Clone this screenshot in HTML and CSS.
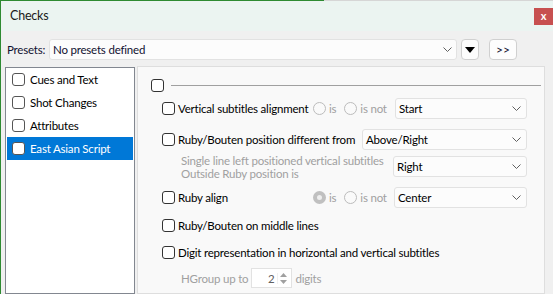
FILE: index.html
```html
<!DOCTYPE html>
<html lang="en">
<head>
  <meta charset="UTF-8">
  <link rel="stylesheet" href="styles.css">
  <title>Checks</title>
</head>
<body>

<div class="window">
  <div class="topline"></div>

  <div class="titlebar">
    <span class="title">Checks</span>
    <span class="close">x</span>
  </div>

  <div class="content">
    <div class="presets">
      <span class="presets-label">Presets:</span>
      <div class="combo combo-presets">
        <span>No presets defined</span>
        <svg class="chev" width="9" height="5" viewBox="0 0 9 5"><path d="M0.5 0.5 L4.5 4.5 L8.5 0.5" fill="none" stroke="#606060" stroke-width="1"/></svg>
      </div>
      <button class="btn btn-drop">
        <svg width="10" height="6" viewBox="0 0 10 6"><path d="M0 0 H10 L5 6 Z" fill="#000"/></svg>
      </button>
      <button class="btn btn-more">&gt;&gt;</button>
    </div>

    <div class="main">
      <ul class="list">
        <li><input type="checkbox" class="check">Cues and Text</li>
        <li><input type="checkbox" class="check">Shot Changes</li>
        <li><input type="checkbox" class="check">Attributes</li>
        <li class="selected"><input type="checkbox" class="check">East Asian Script</li>
      </ul>

      <div class="panel">
        <div class="group-head">
          <input type="checkbox" class="check">
          <span class="rule"></span>
        </div>

        <div class="row row-1">
          <label class="opt"><input type="checkbox" class="check">Vertical subtitles alignment</label>
          <span class="radios">
            <span class="radio"></span><span class="dim">is</span>
            <span class="radio radio-gap"></span><span class="dim">is not</span>
          </span>
          <div class="combo w132">
            <span>Start</span>
            <svg class="chev" width="9" height="5" viewBox="0 0 9 5"><path d="M0.5 0.5 L4.5 4.5 L8.5 0.5" fill="none" stroke="#606060" stroke-width="1"/></svg>
          </div>
        </div>

        <div class="row row-2">
          <label class="opt"><input type="checkbox" class="check">Ruby/Bouten position different from</label>
          <div class="combo w165">
            <span>Above/Right</span>
            <svg class="chev" width="9" height="5" viewBox="0 0 9 5"><path d="M0.5 0.5 L4.5 4.5 L8.5 0.5" fill="none" stroke="#606060" stroke-width="1"/></svg>
          </div>
        </div>

        <div class="row row-3">
          <span class="dim note">Single line left positioned vertical subtitles<br>Outside Ruby position is</span>
          <div class="combo w134">
            <span>Right</span>
            <svg class="chev" width="9" height="5" viewBox="0 0 9 5"><path d="M0.5 0.5 L4.5 4.5 L8.5 0.5" fill="none" stroke="#606060" stroke-width="1"/></svg>
          </div>
        </div>

        <div class="row row-4">
          <label class="opt"><input type="checkbox" class="check">Ruby align</label>
          <span class="radios">
            <span class="radio on"></span><span class="dim">is</span>
            <span class="radio radio-gap"></span><span class="dim">is not</span>
          </span>
          <div class="combo w133">
            <span>Center</span>
            <svg class="chev" width="9" height="5" viewBox="0 0 9 5"><path d="M0.5 0.5 L4.5 4.5 L8.5 0.5" fill="none" stroke="#606060" stroke-width="1"/></svg>
          </div>
        </div>

        <div class="row row-5">
          <label class="opt"><input type="checkbox" class="check">Ruby/Bouten on middle lines</label>
        </div>

        <div class="row row-6">
          <label class="opt"><input type="checkbox" class="check">Digit representation in horizontal and vertical subtitles</label>
        </div>

        <div class="row row-7">
          <span class="dim hgroup">HGroup up to</span>
          <div class="spin">
            <span class="spin-value">2</span>
            <span class="spin-arrows">
              <svg width="7" height="4" viewBox="0 0 7 4"><path d="M0 4 L3.5 0 L7 4 Z" fill="#a0a0a0"/></svg>
              <svg width="7" height="4" viewBox="0 0 7 4"><path d="M0 0 L3.5 4 L7 0 Z" fill="#a0a0a0"/></svg>
            </span>
          </div>
          <span class="dim">digits</span>
        </div>
      </div>
    </div>
  </div>
</div>

</body>
</html>
```

FILE: styles.css
```css
body {
  margin: 0;
  width: 553px;
  height: 294px;
  overflow: hidden;
  font-family: Lato, sans-serif;
  font-size: 11.5px;
  letter-spacing: -0.2px;
  color: #000;
  background: #f0f0f0;
}

.window {
  height: 294px;
  border-left: 1px solid #2e8a32;
  display: flex;
  flex-direction: column;
}

.topline {
  height: 1px;
  background: linear-gradient(to right, #2e8a32 323px, #d6d6d6 323px);
}

/* Title bar */
.titlebar {
  height: 30px;
  background: #ebf4f1;
  display: flex;
  justify-content: space-between;
  align-items: flex-start;
}

.title {
  margin: 7px 0 0 9px;
  font-size: 12.5px;
  color: #1a1a1a;
}

.close {
  margin-top: 7px;
  width: 19px;
  height: 17px;
  background: #c75050;
  color: #fff;
  font-weight: bold;
  font-size: 11px;
  line-height: 16px;
  text-align: center;
}

.content {
  flex: 1;
  background: #f0f0f0;
  display: flex;
  flex-direction: column;
}

/* Presets row */
.presets {
  display: flex;
  align-items: center;
  margin-top: 8px;
  height: 21px;
}

.presets-label {
  width: 48px;
  box-sizing: border-box;
  padding-left: 6px;
  color: #101030;
}

.combo {
  height: 21px;
  box-sizing: border-box;
  border: 1px solid #e2e2e2;
  border-radius: 3px;
  background: #fcfcfc;
  display: flex;
  align-items: center;
  justify-content: space-between;
  padding: 0 5px 0 3px;
  white-space: nowrap;
}

.combo-presets {
  width: 408px;
  padding-right: 4px;
  color: #101030;
}

.btn {
  height: 21px;
  box-sizing: border-box;
  border: 1px solid #d0d0d0;
  border-radius: 4px;
  background: #fdfdfd;
  font-family: inherit;
  font-size: 12px;
  padding: 0;
  display: flex;
  align-items: center;
  justify-content: center;
}

.btn-drop {
  width: 18px;
  margin-left: 4px;
}

.btn-more {
  width: 28px;
  margin-left: 10px;
  color: #101030;
}

/* Main area */
.main {
  flex: 1;
  display: flex;
  margin-top: 7px;
  padding-left: 4px;
}

.list {
  margin: 0;
  padding: 0 1px;
  list-style: none;
  width: 126px;
  border: 1px solid #828790;
  background: #fff;
}

.list li {
  height: 23px;
  display: flex;
  align-items: center;
  padding-left: 5px;
  gap: 5px;
}

.list li.selected {
  background: #0078d7;
  color: #fff;
}

.list .check {
  border-color: #555;
}

.check {
  appearance: none;
  margin: 0;
  width: 13px;
  height: 13px;
  box-sizing: border-box;
  border: 1px solid #333;
  border-radius: 3px;
  background: #fff;
  flex: none;
}

.panel {
  width: 408px;
  margin-left: 2px;
  margin-top: -1px;
  box-sizing: border-box;
  border: 1px solid #dedede;
  background: #f9f9f9;
  padding: 8px 17px 0 13px;
  display: flex;
  flex-direction: column;
}

.group-head {
  height: 21px;
  display: flex;
  align-items: center;
  gap: 7px;
}

.rule {
  flex: 1;
  height: 1px;
  background: #a0a0a0;
  margin-right: -14px;
}

.row {
  height: 21px;
  display: flex;
  align-items: center;
  padding-left: 11px;
}

.row-1 { margin-top: 2px; }
.row-2 { margin-top: 10px; }
.row-3 { margin-top: 6px; }
.row-4 { margin-top: 10px; }
.row-5 { margin-top: 7px; }
.row-6 { margin-top: 6px; }
.row-7 { margin-top: 5px; height: 20px; }

.opt {
  display: flex;
  align-items: center;
  gap: 3px;
  white-space: nowrap;
}

.row-1 .opt,
.row-4 .opt {
  width: 151px;
}

.dim {
  color: #a0a0a0;
}

.note {
  line-height: 13px;
  padding-left: 19px;
  white-space: nowrap;
}

.radios {
  display: flex;
  align-items: center;
}

.radio {
  width: 13px;
  height: 13px;
  box-sizing: border-box;
  border: 1px solid #bcbcbc;
  border-radius: 50%;
  background: #fafafa;
  margin-right: 3px;
}

.radio.on {
  border: 4px solid #c0c0c0;
  background: #eeeeee;
}

.radio-gap {
  margin-left: 8px;
}

.w132 { width: 132px; margin-left: auto; }
.w133 { width: 133px; margin-left: auto; }
.w134 { width: 134px; margin-left: auto; }
.w165 { width: 165px; margin-left: auto; }

.hgroup {
  padding-left: 19px;
}

.spin {
  margin-left: 3px;
  width: 41px;
  height: 20px;
  box-sizing: border-box;
  border: 1px solid #e2e2e2;
  background: #fff;
  display: flex;
  align-items: center;
  justify-content: flex-end;
  gap: 3px;
  padding-right: 2px;
  margin-right: 3px;
}

.spin-value {
  color: #606060;
}

.spin-arrows {
  display: flex;
  flex-direction: column;
  gap: 3px;
  padding: 0 2px;
  border-left: 1px solid #f0f0f0;
}
```
